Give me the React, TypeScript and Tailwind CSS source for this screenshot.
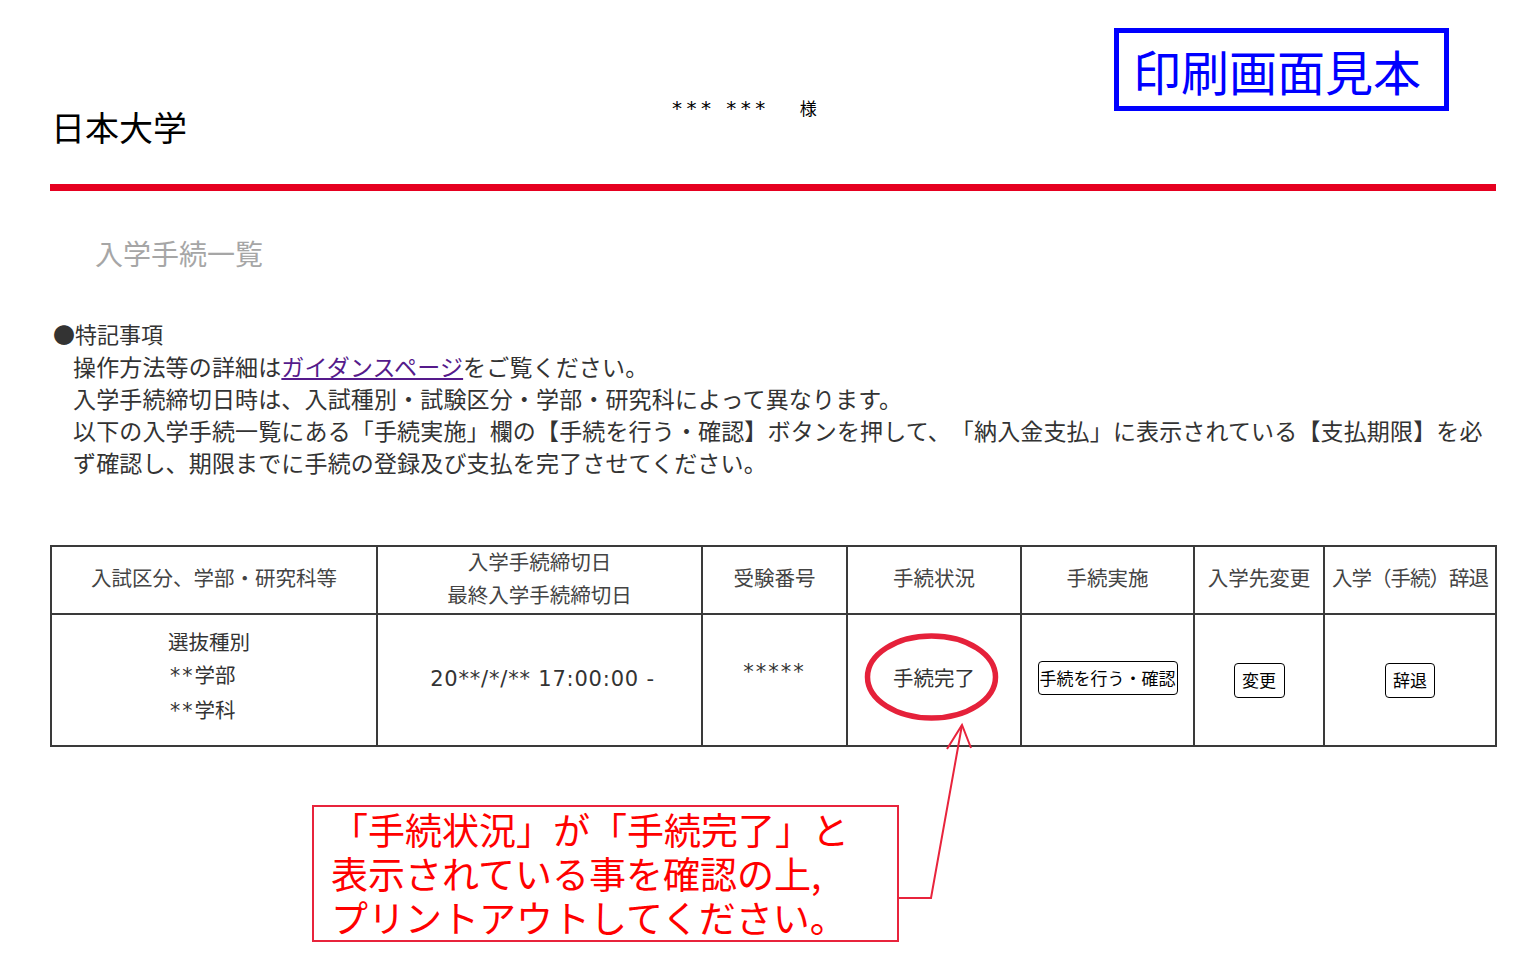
import React from "react";

const jp = "font-['Noto_Sans_CJK_JP','Noto_Sans',sans-serif]";
const ast = "font-['DejaVu_Sans','Noto_Sans_CJK_JP',sans-serif]";
const cell = "border-2 border-[#3a3a3a] p-0 text-center";

export default function App() {
  return (
    <div className={`relative w-[1521px] h-[960px] bg-white ${jp} overflow-hidden [text-spacing-trim:space-all]`}>
      <div className="ml-[50px] w-[1446px]">
        {/* header */}
        <div className="flex h-[184px] items-start">
          <h1 className="mt-[106px] ml-[1px] text-[34px] leading-[41px] text-black w-[621px]">日本大学</h1>
          <div className="mt-[94px] text-[17px] leading-[28px] text-black flex items-center w-[180px]">
            <span className={`${ast} text-[20px] tracking-[4.5px]`}>*** ***</span>
            <span className="ml-[30px]">様</span>
          </div>
          <div className="ml-[262px] mt-[28px] w-[335px] h-[83px] border-[5px] border-[#0000ff] flex items-center pl-[14px]">
            <span className="text-[48px] leading-[56px] text-[#0000ff]">印刷画面見本</span>
          </div>
        </div>
        <div className="h-[7px] bg-[#e60020]" />

        <h2 className="mt-[45px] ml-[45px] text-[28px] leading-[34px] text-[#a6a6a6]">入学手続一覧</h2>

        {/* notes */}
        <div className="mt-[46px] text-[#333]">
          <p className="text-[22px] leading-[34px] ml-[3px]">●特記事項</p>
          <div className="ml-[23px] w-[1423px] text-[23px] leading-[32px] tracking-[0.15px]">
            <p>
              操作方法等の詳細は
              <a href="#" className="text-[#551a8b] underline">ガイダンスページ</a>
              をご覧ください。
            </p>
            <p>入学手続締切日時は、入試種別・試験区分・学部・研究科によって異なります。</p>
            <p>
              以下の入学手続一覧にある「手続実施」欄の【手続を行う・確認】ボタンを押して、「納入金支払」に表示されている【支払期限】を必ず確認し、期限までに手続の登録及び支払を完了させてください。
            </p>
          </div>
        </div>

        {/* table */}
        <table className="mt-[67px] w-[1445px] table-fixed border-collapse text-[20.5px]">
          <colgroup>
            <col className="w-[326px]" />
            <col className="w-[325px]" />
            <col className="w-[145px]" />
            <col className="w-[174px]" />
            <col className="w-[173px]" />
            <col className="w-[130px]" />
            <col className="w-[172px]" />
          </colgroup>
          <thead>
            <tr className="h-[67px] text-[#444]">
              <th className={`${cell} font-normal`}>
                <span className="relative top-[-3px]">入試区分、学部・研究科等</span>
              </th>
              <th className={`${cell} font-normal leading-[33px]`}>
                <div className="relative top-[-2px]">
                  入学手続締切日
                  <br />
                  最終入学手続締切日
                </div>
              </th>
              <th className={`${cell} font-normal`}>
                <span className="relative top-[-3px]">受験番号</span>
              </th>
              <th className={`${cell} font-normal`}>
                <span className="relative top-[-3px]">手続状況</span>
              </th>
              <th className={`${cell} font-normal`}>
                <span className="relative top-[-3px]">手続実施</span>
              </th>
              <th className={`${cell} font-normal whitespace-nowrap`}>
                <span className="relative top-[-3px]">入学先変更</span>
              </th>
              <th className={`${cell} font-normal whitespace-nowrap tracking-[-1px]`}>
                <span className="relative top-[-3px]">入学（手続）辞退</span>
              </th>
            </tr>
          </thead>
          <tbody>
            <tr className="h-[132px] text-[#333]">
              <td className={cell}>
                <div className="relative top-[-4px] inline-block text-left leading-[33px] ml-[-10px]">
                  <div>選抜種別</div>
                  <div className="pl-[2px]">
                    <span className={`${ast} tracking-[2px]`}>**</span>学部
                  </div>
                  <div className="pl-[2px]">
                    <span className={`${ast} tracking-[2px]`}>**</span>学科
                  </div>
                </div>
              </td>
              <td className={`${cell} ${ast} text-[21px] tracking-[0.8px] pl-[6px]`}>
                20**/*/** 17:00:00 -
              </td>
              <td className={cell}>
                <span className={`relative top-[-8px] ${ast} text-[21px] tracking-[2px]`}>*****</span>
              </td>
              <td className={cell}>
                <span className="relative top-[-3px]">手続完了</span>
              </td>
              <td className={cell}>
                <button className="relative top-[-2px] h-[34px] px-[1px] border-[1.5px] border-black rounded-[4px] text-[17px] leading-[30px] text-black bg-white">
                  手続を行う・確認
                </button>
              </td>
              <td className={cell}>
                <button className="h-[35px] w-[51px] border-[1.5px] border-black rounded-[4px] text-[17px] leading-[30px] text-black bg-white">
                  変更
                </button>
              </td>
              <td className={cell}>
                <button className="h-[35px] w-[50px] border-[1.5px] border-black rounded-[4px] text-[17px] leading-[30px] text-black bg-white">
                  辞退
                </button>
              </td>
            </tr>
          </tbody>
        </table>

        {/* callout */}
        <div className="mt-[58px] ml-[262px] w-[587px] h-[137px] border-2 border-[#e8243c] pl-[17px] text-[#ff0000] text-[37px] leading-[44px]">
          <p>「手続状況」が「手続完了」と</p>
          <p>表示されている事を確認の上,</p>
          <p>プリントアウトしてください。</p>
        </div>
      </div>

      {/* annotation: circle and arrow */}
      <svg className="absolute left-0 top-0 pointer-events-none" width="1521" height="960" viewBox="0 0 1521 960">
        <ellipse cx="931.5" cy="677" rx="64" ry="41" fill="none" stroke="#e5213a" strokeWidth="5.5" />
        <polyline points="898,898 931,898 962,725" fill="none" stroke="#e8243c" strokeWidth="2" />
        <polyline points="947,749 962,725 971,748" fill="none" stroke="#e8243c" strokeWidth="2" />
      </svg>
    </div>
  );
}
